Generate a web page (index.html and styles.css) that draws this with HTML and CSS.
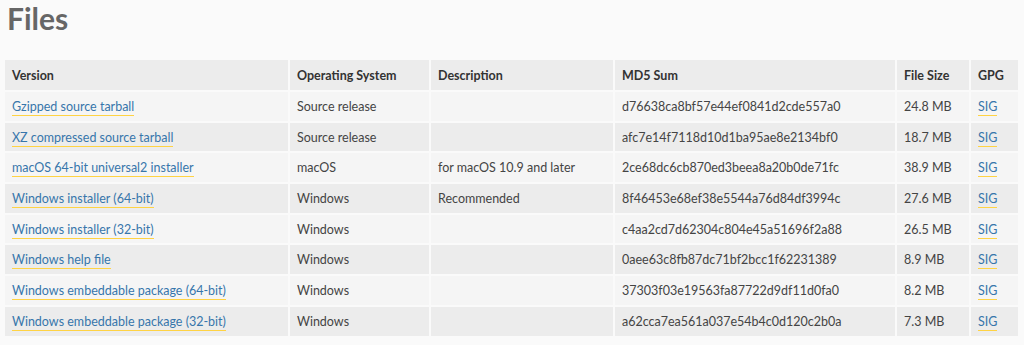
FILE: index.html
```html
<!DOCTYPE html>
<html>
<head>
<meta charset="utf-8">
<link rel="stylesheet" href="styles.css">
</head>
<body>
<h1 class="title">Files</h1>
<table class="files">
  <colgroup>
    <col class="c-ver"><col class="c-os"><col class="c-desc"><col class="c-md5"><col class="c-size"><col class="c-gpg">
  </colgroup>
  <thead>
    <tr><th>Version</th><th>Operating System</th><th>Description</th><th>MD5 Sum</th><th>File Size</th><th>GPG</th></tr>
  </thead>
  <tbody>
    <tr><td><a href="#">Gzipped source tarball</a></td><td>Source release</td><td></td><td>d76638ca8bf57e44ef0841d2cde557a0</td><td>24.8 MB</td><td><a href="#">SIG</a></td></tr>
    <tr><td><a href="#">XZ compressed source tarball</a></td><td>Source release</td><td></td><td>afc7e14f7118d10d1ba95ae8e2134bf0</td><td>18.7 MB</td><td><a href="#">SIG</a></td></tr>
    <tr><td><a href="#">macOS 64-bit universal2 installer</a></td><td>macOS</td><td>for macOS 10.9 and later</td><td>2ce68dc6cb870ed3beea8a20b0de71fc</td><td>38.9 MB</td><td><a href="#">SIG</a></td></tr>
    <tr><td><a href="#">Windows installer (64-bit)</a></td><td>Windows</td><td>Recommended</td><td>8f46453e68ef38e5544a76d84df3994c</td><td>27.6 MB</td><td><a href="#">SIG</a></td></tr>
    <tr><td><a href="#">Windows installer (32-bit)</a></td><td>Windows</td><td></td><td>c4aa2cd7d62304c804e45a51696f2a88</td><td>26.5 MB</td><td><a href="#">SIG</a></td></tr>
    <tr><td><a href="#">Windows help file</a></td><td>Windows</td><td></td><td>0aee63c8fb87dc71bf2bcc1f62231389</td><td>8.9 MB</td><td><a href="#">SIG</a></td></tr>
    <tr><td><a href="#">Windows embeddable package (64-bit)</a></td><td>Windows</td><td></td><td>37303f03e19563fa87722d9df11d0fa0</td><td>8.2 MB</td><td><a href="#">SIG</a></td></tr>
    <tr><td><a href="#">Windows embeddable package (32-bit)</a></td><td>Windows</td><td></td><td>a62cca7ea561a037e54b4c0d120c2b0a</td><td>7.3 MB</td><td><a href="#">SIG</a></td></tr>
  </tbody>
</table>
</body>
</html>
```
FILE: styles.css
```css
html, body {
  margin: 0;
  padding: 0;
  background: #fafafa;
}
body {
  padding: 0 5px;
  font-family: "Lato", "Liberation Sans", sans-serif;
  font-size: 12.5px;
  color: #444;
}
.title {
  margin: 0 0 0 2px;
  font-size: 30px;
  line-height: 36px;
  font-weight: bold;
  color: #666;
  height: 58px;
}
.files {
  border-collapse: separate;
  border-spacing: 2px;
  margin-left: -2px;
  table-layout: fixed;
  width: 1017px;
}
.c-ver { width: 283px; }
.c-os { width: 139px; }
.c-desc { width: 182px; }
.c-md5 { width: 280px; }
.c-size { width: 72px; }
.c-gpg { width: 47px; }
.files th, .files td {
  text-align: left;
  padding: 0 7px;
  height: 28.7px;
  white-space: nowrap;
  overflow: hidden;
}
.files th {
  background: #ececec;
  font-weight: bold;
  color: #333;
  height: 30px;
}
.files tbody tr:nth-child(odd) td { background: #f5f5f5; }
.files tbody tr:nth-child(even) td { background: #ececec; }
.files a {
  color: #3776ab;
  text-decoration: none;
  border-bottom: 1px solid #ffd343;
  padding-bottom: 1px;
}
```
